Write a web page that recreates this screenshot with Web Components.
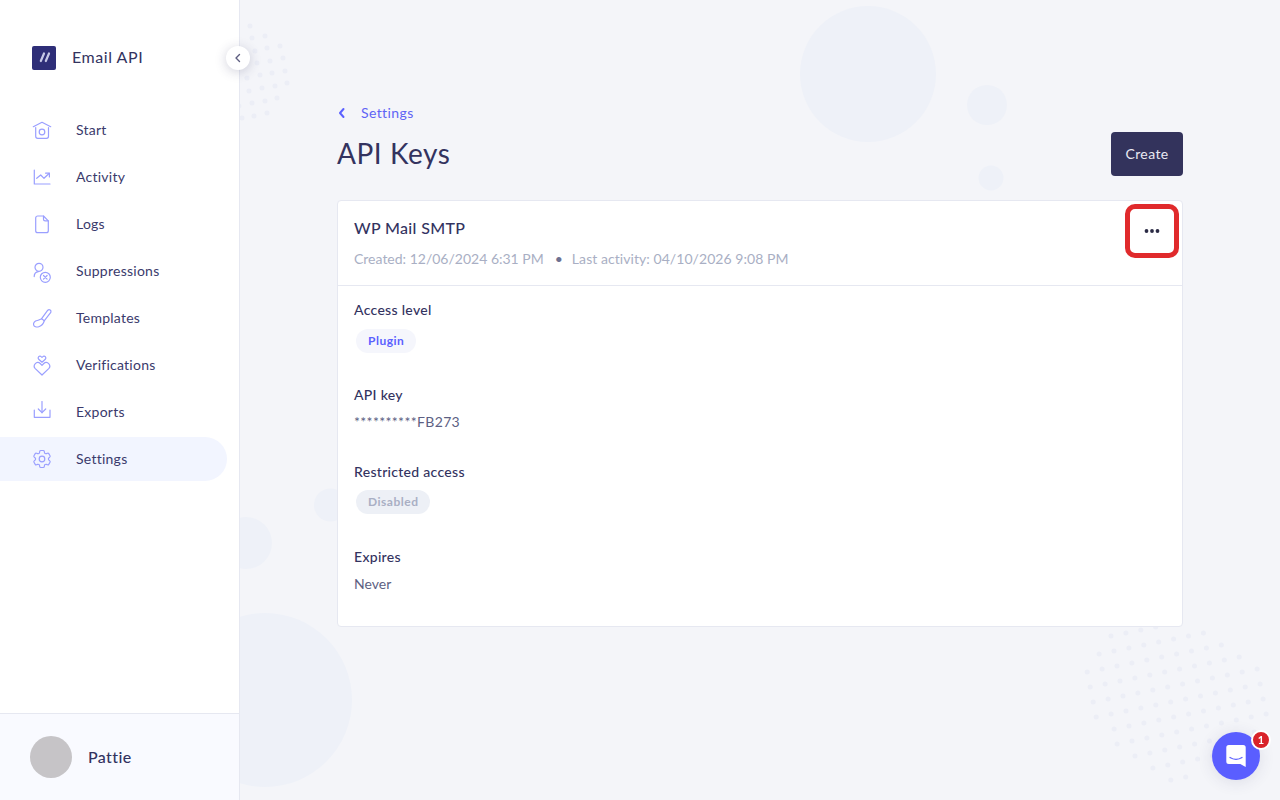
<!DOCTYPE html>
<html lang="en">
<head>
<meta charset="utf-8">
<title>API Keys</title>
<style>
    html, body {
        margin: 0;
        height: 100%;
        font-family: "Lato", "Noto Sans", sans-serif;
        color: #33335f;
    }
</style>
</head>
<body>
<app-shell>
    <app-sidebar slot="sidebar" product="Email API" user="Pattie">
        <nav-item label="Start" icon="start"></nav-item>
        <nav-item label="Activity" icon="activity"></nav-item>
        <nav-item label="Logs" icon="logs"></nav-item>
        <nav-item label="Suppressions" icon="suppressions"></nav-item>
        <nav-item label="Templates" icon="templates"></nav-item>
        <nav-item label="Verifications" icon="verifications"></nav-item>
        <nav-item label="Exports" icon="exports"></nav-item>
        <nav-item label="Settings" icon="settings" active></nav-item>
    </app-sidebar>

    <page-header back="Settings" heading="API Keys" action="Create"></page-header>

    <key-card heading="WP Mail SMTP" created="Created: 12/06/2024 6:31 PM" activity="Last activity: 04/10/2026 9:08 PM">
        <key-field label="Access level" gap="9"><status-pill tone="plugin">Plugin</status-pill></key-field>
        <key-field label="API key" gap="7" style="margin-top:32px"><span style="letter-spacing:.35px">**********FB273</span></key-field>
        <key-field label="Restricted access" gap="8" style="margin-top:30px"><status-pill tone="off">Disabled</status-pill></key-field>
        <key-field label="Expires" gap="7" style="margin-top:33px">Never</key-field>
    </key-card>

    <chat-launcher slot="overlay" count="1"></chat-launcher>
</app-shell>

<script>
// Sidebar icons, 24x24, drawn with stroke only
const ICONS = {
    start: '<path d="M3.3 8.7 12 4.3l8.7 4.4"/><path d="M5.7 9.5v8.8a2 2 0 0 0 2 2h8.8a2 2 0 0 0 2-2V9.5"/><circle cx="12" cy="14" r="2.8"/>',
    activity: '<path d="M4.3 5v14H20"/><path d="M6.7 13.3 10.7 10l3.3 3.3 5.3-5"/><path d="M15.6 8.2h3.8V12"/>',
    logs: '<path d="M13.5 4H7.7a2 2 0 0 0-2 2v12.7a2 2 0 0 0 2 2h8.6a2 2 0 0 0 2-2V8.8z"/><path d="M13.5 4v3.2a1.6 1.6 0 0 0 1.6 1.6h3.2"/>',
    suppressions: '<circle cx="9" cy="8.3" r="4"/><path d="M4.2 17.6c0-3 1.8-4.7 4.2-5"/><circle cx="15.3" cy="18.3" r="5"/><path d="m13.5 16.5 3.6 3.6m0-3.6-3.6 3.6"/>',
    templates: '<path d="M17.800 4.200a1.900 1.900 0 0 1 3 2.200l-6.600 8.400-2.600-2.200z"/><path d="M11.600 12.800c-2.100.6-2.800 1.500-4.400 1.700-2.600.3-4 2.500-3.600 4.300.4 1.800 2.900 2.700 5.200 1.900 2.700-.9 4.800-3.100 5.400-5.800"/>',
    verifications: '<path d="M12 9.2 8.7 6.3c-1.7-1.8.9-4.4 2.500-2.700l.8.8.8-.8c1.600-1.700 4.200.9 2.500 2.700z"/><path d="M12 22l-6.700-6.400c-3.200-3.400 1.700-8.300 4.900-5.100L12 12.300l1.800-1.800c3.200-3.200 8.100 1.700 4.900 5.100z"/>',
    exports: '<path d="M12 1.500v11.200"/><path d="m8.300 9 3.700 3.700L15.700 9"/><path d="M4.300 10v7.300H20V10"/>',
    settings: '<g transform="translate(.6 .6) scale(.95)"><path d="M9.594 3.94c.09-.542.56-.94 1.11-.94h2.593c.55 0 1.02.398 1.11.94l.213 1.281c.063.374.313.686.645.87.074.04.147.083.22.127.325.196.72.257 1.075.124l1.217-.456a1.125 1.125 0 0 1 1.37.49l1.296 2.247a1.125 1.125 0 0 1-.26 1.431l-1.003.827c-.293.241-.438.613-.43.992a7.723 7.723 0 0 1 0 .255c-.008.378.137.75.43.991l1.004.827c.424.35.534.955.26 1.43l-1.298 2.247a1.125 1.125 0 0 1-1.369.491l-1.217-.456c-.355-.133-.75-.072-1.076.124a6.47 6.47 0 0 1-.22.128c-.331.183-.581.495-.644.869l-.213 1.281c-.09.543-.56.94-1.11.94h-2.594c-.55 0-1.019-.398-1.11-.94l-.213-1.281c-.062-.374-.312-.686-.644-.87a6.52 6.52 0 0 1-.22-.127c-.325-.196-.72-.257-1.076-.124l-1.217.456a1.125 1.125 0 0 1-1.369-.49l-1.297-2.247a1.125 1.125 0 0 1 .26-1.431l1.004-.827c.292-.24.437-.613.43-.991a6.932 6.932 0 0 1 0-.255c.007-.38-.138-.751-.43-.992l-1.004-.827a1.125 1.125 0 0 1-.26-1.43l1.297-2.247a1.125 1.125 0 0 1 1.37-.491l1.216.456c.356.133.751.072 1.076-.124.072-.044.146-.086.22-.128.332-.183.582-.495.644-.869l.214-1.28Z"/></g><circle cx="12" cy="12" r="2.800"/>'
};

// Background dots, top left patch, read off the reference
const DOTS_TOP = [
    [250,26],[265,36],[252,38],[280,46],[267,48],[255,51],[283,58],[270,61],[257,63],
    [285,71],[272,73],[260,75],[247,78],[287,83],[275,86],[262,88],[249,91],[277,98],
    [265,101],[252,103],[239,106],[267,113],[254,116],[242,118]
];

// Bottom right patch: row index -> first and last dot of that row
const DOT_ROWS = [[0,4],[-1,6],[-2,7],[-2,8],[-2,9],[-2,9],[-1,9],[-1,9],[0,8],[1,5],[2,3]];

function dotsBottom() {
    let out = '';
    DOT_ROWS.forEach(([first, last], j) => {
        for (let i = first; i <= last; i++) {
            const x = 1111 + i * 14.9 + j * 3;
            const y = 636 - i * 3 + j * 15;
            out += `<circle cx="${x}" cy="${y}" r="2.500"/>`;
        }
    });
    return out;
}

class AppShell extends HTMLElement {
    constructor() {
        super();
        this.attachShadow({ mode: 'open' });
        const top = DOTS_TOP.map(d => `<circle cx="${d[0]}" cy="${d[1]}" r="2.500"/>`).join('');
        this.shadowRoot.innerHTML = `
            <style>
                :host {
                    display: flex;
                    width: 100%;
                    height: 100vh;
                    overflow: hidden;
                    background: #f4f5f9;
                }
                main {
                    flex: 1;
                    position: relative;
                    overflow: hidden;
                    padding: 103px 97px 0;
                }
                .decor {
                    position: absolute;
                    left: 0;
                    top: 0;
                }
                .content {
                    position: relative;
                }
            </style>
            <slot name="sidebar"></slot>
            <main>
                <svg class="decor" width="1040" height="800" viewBox="240 0 1040 800">
                    <g fill="#eef1f8">
                        <circle cx="868" cy="74" r="68"/>
                        <circle cx="987" cy="105" r="20"/>
                        <circle cx="991" cy="178" r="12.500"/>
                        <circle cx="330.500" cy="505" r="16.500"/>
                        <circle cx="246" cy="543" r="26"/>
                        <circle cx="265" cy="700" r="87"/>
                    </g>
                    <g fill="#eceef6">${top}${dotsBottom()}</g>
                </svg>
                <div class="content"><slot></slot></div>
            </main>
            <slot name="overlay"></slot>
        `;
    }
}

class AppSidebar extends HTMLElement {
    constructor() {
        super();
        this.attachShadow({ mode: 'open' });
        this.shadowRoot.innerHTML = `
            <style>
                :host {
                    display: flex;
                    flex-direction: column;
                    flex: none;
                    width: 240px;
                    height: 100%;
                    box-sizing: border-box;
                    position: relative;
                    z-index: 2;
                    background: #fff;
                    border-right: 1px solid #e6e8f1;
                }
                .brand {
                    display: flex;
                    align-items: center;
                    gap: 16px;
                    height: 116px;
                    flex: none;
                    padding-left: 32px;
                    box-sizing: border-box;
                    font-size: 16px;
                    letter-spacing: .55px;
                    color: #33335f;
                }
                .brand span {
                    margin-bottom: 3px;
                }
                .logo {
                    width: 24px;
                    height: 24px;
                    border-radius: 2px;
                    background: #2e2e78;
                    display: block;
                }
                nav {
                    flex: 1;
                    display: flex;
                    flex-direction: column;
                    gap: 3px;
                    margin-top: -8px;
                    padding-right: 12px;
                }
                footer {
                    flex: none;
                    height: 87px;
                    box-sizing: border-box;
                    border-top: 1px solid #e6e8f1;
                    background: #f9faff;
                    display: flex;
                    align-items: center;
                    gap: 16px;
                    padding-left: 30px;
                    font-size: 16px;
                    font-weight: 500;
                    letter-spacing: .4px;
                    color: #33335f;
                }
                footer span {
                    margin-bottom: 2px;
                }
                .avatar {
                    width: 42px;
                    height: 42px;
                    border-radius: 50%;
                    background: #c6c4c7;
                }
                .collapse {
                    position: absolute;
                    left: 226px;
                    top: 46px;
                    width: 24px;
                    height: 24px;
                    border-radius: 50%;
                    background: #fff;
                    box-shadow: 0 2px 12px rgba(51, 51, 95, .22);
                    display: flex;
                    align-items: center;
                    justify-content: center;
                }
            </style>
            <div class="brand">
                <svg class="logo" viewBox="0 0 24 24">
                    <g stroke="#c5c7e6" stroke-width="2.200" stroke-linecap="round">
                        <path d="M12 7.500 8.800 15"/>
                        <path d="M17 7.500 13.800 15"/>
                    </g>
                </svg>
                <span>${this.getAttribute('product')}</span>
            </div>
            <nav><slot></slot></nav>
            <footer>
                <div class="avatar"></div>
                <span>${this.getAttribute('user')}</span>
            </footer>
            <div class="collapse">
                <svg width="12" height="12" viewBox="0 0 12 12" fill="none" stroke="#5d5d80" stroke-width="1.400" stroke-linecap="round" stroke-linejoin="round">
                    <path d="M7.500 2.500 4 6l3.500 3.500"/>
                </svg>
            </div>
        `;
    }
}

class NavItem extends HTMLElement {
    constructor() {
        super();
        this.attachShadow({ mode: 'open' });
        this.shadowRoot.innerHTML = `
            <style>
                :host {
                    display: flex;
                    align-items: center;
                    gap: 22px;
                    height: 44px;
                    padding-left: 30px;
                    font-size: 14px;
                    letter-spacing: .25px;
                    color: #3a3a6c;
                    border-radius: 0 22px 22px 0;
                }
                :host([active]) {
                    background: #f2f5ff;
                }
                span {
                    margin-bottom: 2px;
                }
                svg {
                    width: 24px;
                    height: 24px;
                    fill: none;
                    stroke: #9a9fff;
                    stroke-width: 1.200;
                    stroke-linecap: round;
                    stroke-linejoin: round;
                }
            </style>
            <svg viewBox="0 0 24 24">${ICONS[this.getAttribute('icon')]}</svg>
            <span>${this.getAttribute('label')}</span>
        `;
    }
}

class PageHeader extends HTMLElement {
    constructor() {
        super();
        this.attachShadow({ mode: 'open' });
        this.shadowRoot.innerHTML = `
            <style>
                :host {
                    display: flex;
                    justify-content: space-between;
                    align-items: flex-end;
                    margin-bottom: 24px;
                }
                .back {
                    display: flex;
                    align-items: center;
                    gap: 13px;
                    height: 20px;
                    font-size: 14px;
                    letter-spacing: .4px;
                    color: #5f64f5;
                }
                .back span {
                    margin-bottom: 2px;
                }
                h1 {
                    margin: 12px 0 5px;
                    font-size: 28px;
                    line-height: 36px;
                    font-weight: 400;
                    letter-spacing: .55px;
                    color: #33335f;
                }
                button {
                    width: 72px;
                    height: 44px;
                    padding: 0 0 2px;
                    border: 0;
                    border-radius: 4px;
                    background: #33335c;
                    color: #e9e9f2;
                    font: inherit;
                    font-size: 14px;
                    letter-spacing: .4px;
                }
            </style>
            <div>
                <div class="back">
                    <svg width="11" height="12" viewBox="0 0 11 12" fill="none" stroke="#5b61ff" stroke-width="2" stroke-linecap="round" stroke-linejoin="round">
                        <path d="M6.500 2 3 6l3.500 4"/>
                    </svg>
                    <span>${this.getAttribute('back')}</span>
                </div>
                <h1>${this.getAttribute('heading')}</h1>
            </div>
            <button>${this.getAttribute('action')}</button>
        `;
    }
}

class KeyCard extends HTMLElement {
    constructor() {
        super();
        this.attachShadow({ mode: 'open' });
        this.shadowRoot.innerHTML = `
            <style>
                :host {
                    display: block;
                    position: relative;
                    background: #fff;
                    border: 1px solid #e6e8f1;
                    border-radius: 4px;
                }
                header {
                    padding: 16px 16px;
                    border-bottom: 1px solid #e6e8f1;
                }
                h2 {
                    margin: 0;
                    font-size: 16px;
                    line-height: 22px;
                    font-weight: 500;
                    letter-spacing: .35px;
                    color: #33335f;
                }
                .meta {
                    display: flex;
                    gap: 11px;
                    margin-top: 10px;
                    font-size: 14px;
                    line-height: 20px;
                    color: #a9afc4;
                }
                .dot {
                    margin-right: -2px;
                    color: #6e7191;
                }
                .last {
                    letter-spacing: .06px;
                }
                .body {
                    padding: 14px 16px 32px;
                }
                .menu {
                    position: absolute;
                    left: 787px;
                    top: 3px;
                    width: 44px;
                    height: 44px;
                    border: 5px solid #e02a2c;
                    border-radius: 10px;
                    display: flex;
                    align-items: center;
                    justify-content: center;
                }
            </style>
            <header>
                <h2>${this.getAttribute('heading')}</h2>
                <div class="meta">
                    <span>${this.getAttribute('created')}</span>
                    <span class="dot">•</span>
                    <span class="last">${this.getAttribute('activity')}</span>
                </div>
            </header>
            <div class="body"><slot></slot></div>
            <div class="menu">
                <svg width="18" height="6" viewBox="0 0 18 6" fill="#2b2b45">
                    <circle cx="3.500" cy="3" r="1.900"/>
                    <circle cx="9" cy="3" r="1.900"/>
                    <circle cx="14.500" cy="3" r="1.900"/>
                </svg>
            </div>
        `;
    }
}

class KeyField extends HTMLElement {
    constructor() {
        super();
        this.attachShadow({ mode: 'open' });
        this.shadowRoot.innerHTML = `
            <style>
                :host {
                    display: block;
                    font-size: 14px;
                    line-height: 20px;
                    color: #5d5f83;
                }
                .label {
                    font-weight: 500;
                    letter-spacing: .3px;
                    color: #33335f;
                    margin-bottom: ${this.getAttribute('gap')}px;
                }
            </style>
            <div class="label">${this.getAttribute('label')}</div>
            <slot></slot>
        `;
    }
}

class StatusPill extends HTMLElement {
    constructor() {
        super();
        this.attachShadow({ mode: 'open' });
        this.shadowRoot.innerHTML = `
            <style>
                :host {
                    display: block;
                    width: fit-content;
                    height: 24px;
                    margin-left: 2px;
                    padding: 0 12px;
                    border-radius: 12px;
                    font-size: 12px;
                    font-weight: 700;
                    letter-spacing: .5px;
                    line-height: 24px;
                }
                :host([tone="plugin"]) {
                    background: #f5f6fc;
                    color: #5b61ff;
                }
                :host([tone="off"]) {
                    background: #edf0f6;
                    color: #a9afc4;
                }
            </style>
            <slot></slot>
        `;
    }
}

class ChatLauncher extends HTMLElement {
    constructor() {
        super();
        this.attachShadow({ mode: 'open' });
        this.shadowRoot.innerHTML = `
            <style>
                :host {
                    position: fixed;
                    left: 1212px;
                    top: 732px;
                    width: 48px;
                    height: 48px;
                    border-radius: 50%;
                    background: #5a5eff;
                    box-shadow: 0 2px 16px rgba(51, 51, 95, .12);
                    display: flex;
                    align-items: center;
                    justify-content: center;
                    z-index: 3;
                }
                .count {
                    position: absolute;
                    left: 40px;
                    top: 0;
                    width: 16px;
                    height: 16px;
                    box-sizing: content-box;
                    border: 2px solid #fff;
                    margin: -2px 0 0 -1px;
                    border-radius: 50%;
                    background: #d9232a;
                    color: #fff;
                    font-size: 11px;
                    font-weight: 700;
                    line-height: 16px;
                    text-align: center;
                }
            </style>
            <svg width="24" height="24" viewBox="0 0 24 24">
                <path fill="#fff" d="M2.300 3.500A2.500 2.500 0 0 1 4.800 1h14.400a2.500 2.500 0 0 1 2.500 2.500V23l-5.400-3H4.800a2.500 2.500 0 0 1-2.500-2.500z"/>
                <path fill="none" stroke="#5a5eff" stroke-width="1.300" stroke-linecap="round" d="M6 13.500c3.500 2.300 8.500 2.300 12 0"/>
            </svg>
            <span class="count">${this.getAttribute('count')}</span>
        `;
    }
}

customElements.define('app-shell', AppShell);
customElements.define('app-sidebar', AppSidebar);
customElements.define('nav-item', NavItem);
customElements.define('page-header', PageHeader);
customElements.define('key-card', KeyCard);
customElements.define('key-field', KeyField);
customElements.define('status-pill', StatusPill);
customElements.define('chat-launcher', ChatLauncher);
</script>
</body>
</html>
